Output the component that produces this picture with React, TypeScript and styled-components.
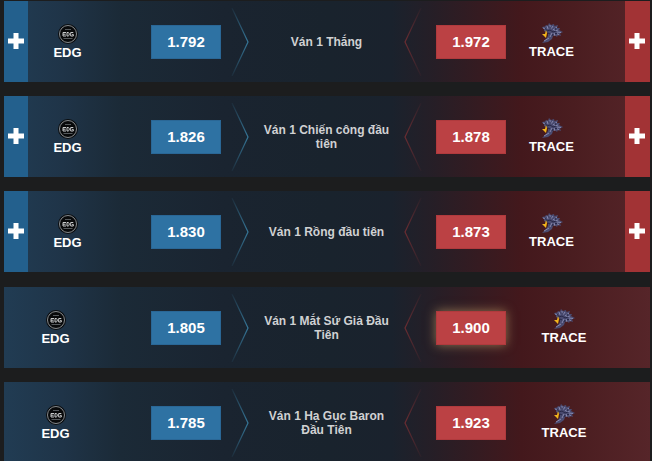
import React from "react";
import styled, { createGlobalStyle } from "styled-components";

const GlobalStyle = createGlobalStyle`
  body {
    margin: 0;
    background: #1c1d1e;
    color: #fff;
    font-family: "Liberation Sans", Arial, sans-serif;
    overflow: hidden;
  }
`;

type Side = "home" | "away";

interface Market {
  title: string;
  home: string;
  away: string;
  highlight?: Side;
}

const expandable: Market[] = [
  { title: "Ván 1 Thắng", home: "1.792", away: "1.972" },
  { title: "Ván 1 Chiến công đầu tiên", home: "1.826", away: "1.878" },
  { title: "Ván 1 Rồng đầu tiên", home: "1.830", away: "1.873" },
];

const simple: Market[] = [
  { title: "Ván 1 Mắt Sứ Giả Đầu Tiên", home: "1.805", away: "1.900", highlight: "away" },
  { title: "Ván 1 Hạ Gục Baron Đầu Tiên", home: "1.785", away: "1.923" },
];

const Page = styled.main`
  display: flex;
  flex-direction: column;
  gap: 15px;
  padding: 1px 2px 0 4px;
`;

const Group = styled.section`
  display: flex;
  flex-direction: column;
  gap: 14px;
`;

const Row = styled.article`
  display: grid;
  grid-template-columns: minmax(0, 147fr) 70px minmax(0, 215fr) 70px minmax(0, 144fr);
  align-items: center;
  min-height: 81px;
  background: linear-gradient(
    90deg,
    #213c53 0%,
    #1f3448 9%,
    #1b2a37 18%,
    #1a2430 34%,
    #19232d 50%,
    #1a222d 60%,
    #271e26 67%,
    #43181c 80%,
    #4a1d20 88%,
    #562529 100%
  );
`;

const SideArea = styled.div<{ $side: Side }>`
  display: flex;
  align-self: stretch;
  flex-direction: ${(p) => (p.$side === "home" ? "row" : "row-reverse")};
`;

const Expand = styled.button<{ $side: Side }>`
  display: flex;
  align-items: center;
  justify-content: center;
  flex: none;
  width: ${(p) => (p.$side === "home" ? "24px" : "25px")};
  padding: 0 1px 1px 0;
  border: 0;
  cursor: pointer;
  background: ${(p) => (p.$side === "home" ? "#23608d" : "#a23335")};
`;

const Team = styled.div<{ $side: Side }>`
  display: flex;
  flex: 1;
  flex-direction: column;
  align-items: center;
  justify-content: center;
  gap: 1px;
  margin-right: ${(p) => (p.$side === "home" ? "44px" : "0")};
  padding-top: ${(p) => (p.$side === "home" ? "2px" : "0")};
  font-size: 13px;
  line-height: 16px;
  font-weight: 700;
`;

const AwayGutter = styled.div`
  flex: 0 1 28px;
`;

const Odds = styled.button<{ $side: Side; $glow: boolean }>`
  height: 34px;
  padding: 0;
  border: 1px solid ${(p) => (p.$side === "home" ? "#2a6796" : "#b03a3d")};
  background: ${(p) => (p.$side === "home" ? "#2e72a3" : "#bb4144")};
  color: #fff;
  font: 700 15px/32px "Liberation Sans", Arial, sans-serif;
  cursor: pointer;
  box-shadow: ${(p) => (p.$glow ? "0 0 10px rgba(196, 160, 104, 0.65)" : "none")};
`;

const Middle = styled.div`
  display: flex;
  align-items: center;
  justify-content: space-between;
  padding: 0 14px 0 10px;
`;

const Title = styled.h2`
  flex: 1;
  max-width: 134px;
  margin: 0;
  color: #d0d1d3;
  font-size: 12px;
  line-height: 14px;
  font-weight: 700;
  text-align: center;
`;

const Icon = styled.svg`
  display: block;
  flex: none;
`;

function Chevron({ side, id }: { side: Side; id: string }) {
  const color = side === "home" ? "#36789a" : "#6b2c31";
  return (
    <Icon width="18" height="68" viewBox="0 0 18 68" fill="none" aria-hidden="true">
      <defs>
        <linearGradient id={id} x1="0" y1="0" x2="0" y2="68" gradientUnits="userSpaceOnUse">
          <stop offset="0" stopColor={color} stopOpacity="0.1" />
          <stop offset="0.5" stopColor={color} />
          <stop offset="1" stopColor={color} stopOpacity="0.1" />
        </linearGradient>
      </defs>
      <path d={side === "home" ? "M1 0 17 34 1 68" : "M17 0 1 34 17 68"} stroke={`url(#${id})`} strokeWidth="1.2" />
    </Icon>
  );
}

function Plus() {
  return (
    <Icon width="16" height="16" viewBox="0 0 16 16" aria-hidden="true">
      <path d="M5.5 0h5v5.5H16v5h-5.5V16h-5v-5.5H0v-5h5.5z" fill="#fff" />
    </Icon>
  );
}

function EdgLogo() {
  return (
    <Icon width="20" height="20" viewBox="0 0 20 20" aria-hidden="true">
      <circle cx="10" cy="10" r="10" fill="#0b0d0f" />
      <circle cx="10" cy="10" r="8.5" fill="#08090a" stroke="#85898c" strokeWidth="1" />
      <path d="M7 5.5h6M5.5 14.5h9" stroke="#55595c" strokeWidth="1" />
      <path
        d="M8 8.5H5v3.5h3M5 10.2h2.6M9 8.5v3.5h1.2l1-.8V9.3l-1-.8zM15.3 8.5h-2.6v3.5h2.6v-1.6h-1.2"
        fill="none"
        stroke="#c9cbcc"
        strokeWidth="1"
      />
    </Icon>
  );
}

function TraceLogo() {
  return (
    <Icon width="22" height="20" viewBox="0 0 22 20" aria-hidden="true">
      <path
        d="M1 4l3-.5L5 2l2 .5L8 0l2 2 3-1 .5 2L17 2l-1 3 3 0-1 2 4 2-3 1.5 1 2.5-3-1-1 2-2-2-2 1-1 3-4 3-6 1 4-4 2-3 0-3-4-2 0-2-1.5-1z"
        fill="#4a4b70"
      />
      <path
        d="M2 5l3 1M6 3l1 3M9 2l0 3M12 3l-2 3M16 4l-4 3M17 7l-4 1M20 9.5l-4-.5M18 12l-3-2M14 13l-1-3M9 14l2-4M3 18l5-3"
        fill="none"
        stroke="#8688ae"
        strokeWidth="1"
      />
      <path d="M4 5l2 3 3-1 3 2 3-1M8 3.5l2 2M14 5l1 2M16 10.5l-2 0M11 13l1-2M7 10l2 1" fill="none" stroke="#272746" strokeWidth="1" />
      <path d="M5 7l1 3-1 5-2-2-2-2 3 0z" fill="#f2b51c" />
    </Icon>
  );
}

function MarketRow({ market, canExpand, id }: { market: Market; canExpand: boolean; id: string }) {
  return (
    <Row>
      <SideArea $side="home">
        {canExpand && (
          <Expand $side="home" aria-label={`EDG: ${market.title}`}>
            <Plus />
          </Expand>
        )}
        <Team $side="home">
          <EdgLogo />
          <span>EDG</span>
        </Team>
      </SideArea>
      <Odds $side="home" $glow={market.highlight === "home"}>
        {market.home}
      </Odds>
      <Middle>
        <Chevron side="home" id={`${id}-home`} />
        <Title>{market.title}</Title>
        <Chevron side="away" id={`${id}-away`} />
      </Middle>
      <Odds $side="away" $glow={market.highlight === "away"}>
        {market.away}
      </Odds>
      <SideArea $side="away">
        {canExpand && (
          <Expand $side="away" aria-label={`TRACE: ${market.title}`}>
            <Plus />
          </Expand>
        )}
        <AwayGutter />
        <Team $side="away">
          <TraceLogo />
          <span>TRACE</span>
        </Team>
      </SideArea>
    </Row>
  );
}

export default function App() {
  return (
    <>
      <GlobalStyle />
      <Page>
        <Group>
          {expandable.map((m, i) => (
            <MarketRow key={m.title} market={m} canExpand id={`expandable-${i}`} />
          ))}
        </Group>
        <Group>
          {simple.map((m, i) => (
            <MarketRow key={m.title} market={m} canExpand={false} id={`simple-${i}`} />
          ))}
        </Group>
      </Page>
    </>
  );
}
